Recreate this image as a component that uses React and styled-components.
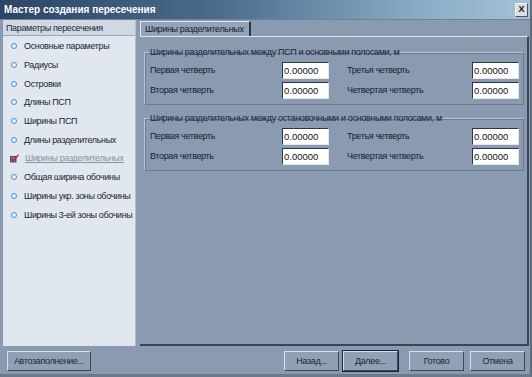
import styled, { createGlobalStyle } from 'styled-components'

const GlobalStyle = createGlobalStyle`
  html, body {
    margin: 0;
    padding: 0;
    background: #8a9bb1;
  }
  body {
    font-family: "Liberation Sans", Arial, sans-serif;
    font-size: 9px;
    letter-spacing: -0.35px;
    color: #17202c;
  }
`

const Window = styled.div`
  width: 532px;
  height: 377px;
  box-sizing: border-box;
  background: #8a9bb1;
  border-right: 2px solid #5d6c80;
  border-bottom: 3px solid #6b7a8e;
  display: flex;
  flex-direction: column;
`

const TitleBar = styled.div`
  height: 19px;
  flex: none;
  display: flex;
  align-items: center;
  justify-content: space-between;
  padding: 0 2px 0 4px;
  background: linear-gradient(90deg, #2b4566 0%, #4a6a8c 40%, #8cadc6 80%, #a4c2d6 100%);
  color: #ffffff;
  font-weight: bold;
  font-size: 10px;
  letter-spacing: 0;
  border-bottom: 1px solid #6f8299;
`

const CloseButton = styled.div`
  width: 11px;
  height: 12px;
  background: #d8dfe6;
  border: 1px solid #eef2f6;
  border-right-color: #4a5666;
  border-bottom-color: #4a5666;
  color: #111;
  font-size: 9px;
  font-weight: bold;
  display: flex;
  align-items: center;
  justify-content: center;
  line-height: 1;
`

const Main = styled.div`
  height: 326px;
  flex: none;
  display: flex;
  padding: 0 0 0 3px;
  gap: 4px;
`

const SidePanel = styled.div`
  width: 133px;
  background: #e1e7ef;
  display: flex;
  flex-direction: column;
  border-right: 1px solid #b4c0ce;
`

const SideHeader = styled.div`
  height: 15px;
  display: flex;
  align-items: center;
  padding-left: 3px;
  background: #cfd8e3;
  border-bottom: 1px solid #9aa8b9;
  color: #1e2835;
`

const StepList = styled.div`
  padding-top: 1px;
  display: flex;
  flex-direction: column;
`

const Step = styled.div`
  height: 18.7px;
  display: flex;
  align-items: center;
  padding-left: 7px;
  gap: 6px;
  white-space: nowrap;
  color: ${p => (p.$current ? '#8793a4' : '#1c2532')};
  text-decoration: ${p => (p.$current ? 'underline' : 'none')};
`

const Dot = styled.span`
  width: 4px;
  height: 4px;
  border-radius: 50%;
  border: 1.5px solid #3d8fd0;
  background: #e9f2fa;
  flex: none;
  margin-left: 1px;
  margin-right: 1px;
`

const CheckIcon = () => (
  <svg width="9" height="9" viewBox="0 0 9 9" style={{ flex: 'none' }}>
    <rect x="0.5" y="2.5" width="5.5" height="5.5" fill="#6c7d96" stroke="#2f3d55" strokeWidth="0.8" />
    <path d="M1.5 4.5 L3.5 7 L8.5 0.8" fill="none" stroke="#d0202a" strokeWidth="1.4" />
  </svg>
)

const RightPane = styled.div`
  flex: 1;
  display: flex;
  flex-direction: column;
  padding-top: 1px;
  margin-right: 1px;
`

const TabRow = styled.div`
  height: 15px;
  display: flex;
  align-items: flex-end;
`

const Tab = styled.div`
  height: 15px;
  box-sizing: border-box;
  padding: 0 5px 0 4px;
  display: flex;
  align-items: center;
  background: #93a4b9;
  border-top: 1px solid #dfe6ee;
  border-left: 1px solid #dfe6ee;
  border-right: 2px solid #2a3647;
`

const TabPanel = styled.div`
  flex: 1;
  border-top: 1px solid #dfe6ee;
  border-right: 2px solid #39465a;
  border-bottom: 2px solid #39465a;
  padding: 10px 3px 0 4px;
  display: flex;
  flex-direction: column;
  gap: 8px;
`

const Group = styled.fieldset`
  margin: 0;
  padding: 4px 4px 5px 4px;
  border: 1px solid #b9c5d3;
  border-right-color: #6c7b8f;
  border-bottom-color: #6c7b8f;
  box-shadow: inset 1px 1px 0 #6c7b8f;
  display: grid;
  grid-template-columns: 133px 64px 126px 47px;
  row-gap: 2px;
  align-items: center;
`

const Legend = styled.legend`
  padding: 0 1px 0 1px;
  margin-left: 0;
  color: #1c2532;
`

const FieldLabel = styled.div`
  padding-left: 1px;
  height: 18px;
  display: flex;
  align-items: center;
`

const Input = styled.div`
  width: 47px;
  height: 17px;
  box-sizing: border-box;
  background: #ffffff;
  border: 1px solid #2c3645;
  border-right-color: #e4e9ef;
  border-bottom-color: #e4e9ef;
  display: flex;
  align-items: center;
  padding-left: 1px;
  font-size: 9.5px;
  letter-spacing: 0;
  color: #111;
`

const Footer = styled.div`
  flex: 1;
  display: flex;
  align-items: center;
  padding: 2px 5px 0 7px;
`

const Button = styled.div`
  width: ${p => p.$w || 55}px;
  height: 20px;
  box-sizing: border-box;
  margin-left: ${p => p.$gap || 0}px;
  background: #90a1b6;
  border: 1px solid #d6dee8;
  border-right-color: #3a475a;
  border-bottom-color: #3a475a;
  box-shadow: ${p => (p.$default ? '0 0 0 1px #1c2636' : 'none')};
  display: flex;
  align-items: center;
  justify-content: center;
  color: #1c2532;
`

const Spacer = styled.div`
  flex: 1;
`

const steps = [
  'Основные параметры',
  'Радиусы',
  'Островки',
  'Длины ПСП',
  'Ширины ПСП',
  'Длины разделительных',
  'Ширины разделительных',
  'Общая ширина обочины',
  'Ширины укр. зоны обочины',
  'Ширины 3-ей зоны обочины',
]

const groups = [
  'Ширины разделительных между ПСП и основными полосами, м',
  'Ширины разделительных между остановочными и основными полосами, м',
]

const App = () => {
  return (
    <Window>
      <GlobalStyle />
      <TitleBar>
        <span>Мастер создания пересечения</span>
        <CloseButton>X</CloseButton>
      </TitleBar>
      <Main>
        <SidePanel>
          <SideHeader>Параметры пересечения</SideHeader>
          <StepList>
            {steps.map((s, i) => (
              <Step key={s} $current={i === 6}>
                {i === 6 ? <CheckIcon /> : <Dot />}
                {s}
              </Step>
            ))}
          </StepList>
        </SidePanel>
        <RightPane>
          <TabRow>
            <Tab>Ширины разделительных</Tab>
          </TabRow>
          <TabPanel>
            {groups.map(g => (
              <Group key={g}>
                <Legend>{g}</Legend>
                <FieldLabel>Первая четверть</FieldLabel>
                <Input>0.00000</Input>
                <FieldLabel>Третья четверть</FieldLabel>
                <Input>0.00000</Input>
                <FieldLabel>Вторая четверть</FieldLabel>
                <Input>0.00000</Input>
                <FieldLabel>Четвертая четверть</FieldLabel>
                <Input>0.00000</Input>
              </Group>
            ))}
          </TabPanel>
        </RightPane>
      </Main>
      <Footer>
        <Button $w={84}>Автозаполнение...</Button>
        <Spacer />
        <Button>Назад...</Button>
        <Button $gap={4} $default>Далее...</Button>
        <Button $gap={11}>Готово</Button>
        <Button $gap={6}>Отмена</Button>
      </Footer>
    </Window>
  )
}

export default App
